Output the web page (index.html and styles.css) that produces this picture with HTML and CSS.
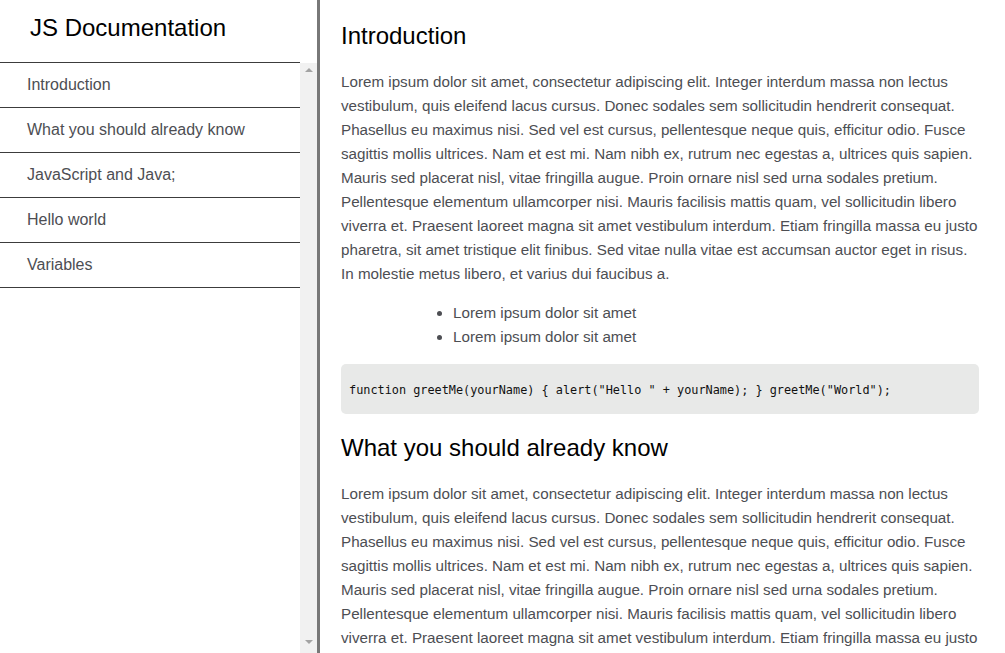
FILE: index.html
```html
<!DOCTYPE html>
<html lang="en">
<head>
<meta charset="utf-8">
<title>JS Documentation</title>
<link rel="stylesheet" href="styles.css">
</head>
<body>
<nav class="sidebar">
  <header class="sidebar-header">JS Documentation</header>
  <div class="nav-body">
    <ul class="nav-list">
      <li class="nav-item">Introduction</li>
      <li class="nav-item">What you should already know</li>
      <li class="nav-item">JavaScript and Java;</li>
      <li class="nav-item">Hello world</li>
      <li class="nav-item">Variables</li>
    </ul>
    <div class="scrollbar">
      <span class="arrow arrow-up"></span>
      <span class="arrow arrow-down"></span>
    </div>
  </div>
</nav>
<main class="main">
  <section class="section">
    <h2 class="section-title">Introduction</h2>
    <p class="text">Lorem ipsum dolor sit amet, consectetur adipiscing elit. Integer interdum massa non lectus vestibulum, quis eleifend lacus cursus. Donec sodales sem sollicitudin hendrerit consequat. Phasellus eu maximus nisi. Sed vel est cursus, pellentesque neque quis, efficitur odio. Fusce sagittis mollis ultrices. Nam et est mi. Nam nibh ex, rutrum nec egestas a, ultrices quis sapien. Mauris sed placerat nisl, vitae fringilla augue. Proin ornare nisl sed urna sodales pretium. Pellentesque elementum ullamcorper nisi. Mauris facilisis mattis quam, vel sollicitudin libero viverra et. Praesent laoreet magna sit amet vestibulum interdum. Etiam fringilla massa eu justo pharetra, sit amet tristique elit finibus. Sed vitae nulla vitae est accumsan auctor eget in risus. In molestie metus libero, et varius dui faucibus a.</p>
    <ul class="bullets">
      <li>Lorem ipsum dolor sit amet</li>
      <li>Lorem ipsum dolor sit amet</li>
    </ul>
    <pre class="code"><code>function greetMe(yourName) { alert("Hello " + yourName); } greetMe("World");</code></pre>
  </section>
  <section class="section">
    <h2 class="section-title">What you should already know</h2>
    <p class="text">Lorem ipsum dolor sit amet, consectetur adipiscing elit. Integer interdum massa non lectus vestibulum, quis eleifend lacus cursus. Donec sodales sem sollicitudin hendrerit consequat. Phasellus eu maximus nisi. Sed vel est cursus, pellentesque neque quis, efficitur odio. Fusce sagittis mollis ultrices. Nam et est mi. Nam nibh ex, rutrum nec egestas a, ultrices quis sapien. Mauris sed placerat nisl, vitae fringilla augue. Proin ornare nisl sed urna sodales pretium. Pellentesque elementum ullamcorper nisi. Mauris facilisis mattis quam, vel sollicitudin libero viverra et. Praesent laoreet magna sit amet vestibulum interdum. Etiam fringilla massa eu justo pharetra, sit amet tristique elit finibus. Sed vitae nulla vitae est accumsan auctor eget in risus. In molestie metus libero, et varius dui faucibus a.</p>
    <ul class="bullets">
      <li>Lorem ipsum dolor sit amet</li>
      <li>Lorem ipsum dolor sit amet</li>
    </ul>
  </section>
</main>
</body>
</html>
```
FILE: styles.css
```css
* { box-sizing: border-box; }
html, body { margin: 0; padding: 0; }
body {
  display: flex;
  align-items: flex-start;
  font-family: "Liberation Sans", Arial, sans-serif;
  color: #4d4e53;
  background: #fff;
}
.sidebar {
  position: sticky;
  top: 0;
  width: 320px;
  flex-shrink: 0;
  height: 100vh;
  border-right: 3px solid #787878;
  display: flex;
  flex-direction: column;
}
.sidebar-header {
  width: 300px;
  height: 63px;
  padding: 14px 0 0 30px;
  font-size: 24px;
  line-height: 28px;
  color: #000;
  border-bottom: 1px solid #3c3c3c;
}
.nav-body {
  flex: 1;
  display: flex;
  min-height: 0;
}
.nav-list {
  list-style: none;
  margin: 0;
  padding: 0;
  width: 300px;
}
.nav-item {
  height: 45px;
  padding-left: 27px;
  font-size: 16px;
  line-height: 44px;
  color: #4d4e53;
  border-bottom: 1px solid #3c3c3c;
}
.scrollbar {
  width: 17px;
  background: #f1f1f1;
  display: flex;
  flex-direction: column;
  justify-content: space-between;
  align-items: center;
  padding: 5px 0 9px;
}
.arrow {
  width: 0;
  height: 0;
  border-left: 4px solid transparent;
  border-right: 4px solid transparent;
}
.arrow-up { border-bottom: 4px solid #a3a3a3; }
.arrow-down { border-top: 4px solid #a3a3a3; }
.main {
  flex: 1;
  min-width: 0;
  padding: 22px 26px 0 21px;
}
.section-title {
  margin: 0 0 20px;
  font-size: 24px;
  line-height: 28px;
  font-weight: normal;
  color: #000;
}
.text {
  margin: 0 0 15px;
  font-size: 15.2px;
  line-height: 24px;
}
.bullets {
  margin: 0 0 15px;
  padding-left: 112px;
  font-size: 15.2px;
  line-height: 24px;
}
.code {
  margin: 0 0 20px;
  height: 50px;
  padding: 2px 8px 0;
  background: #e8e9e8;
  border-radius: 5px;
  font-family: "Liberation Mono", "DejaVu Sans Mono", monospace;
  font-size: 11.85px;
  line-height: 48px;
  color: #111;
  white-space: pre;
}
```
